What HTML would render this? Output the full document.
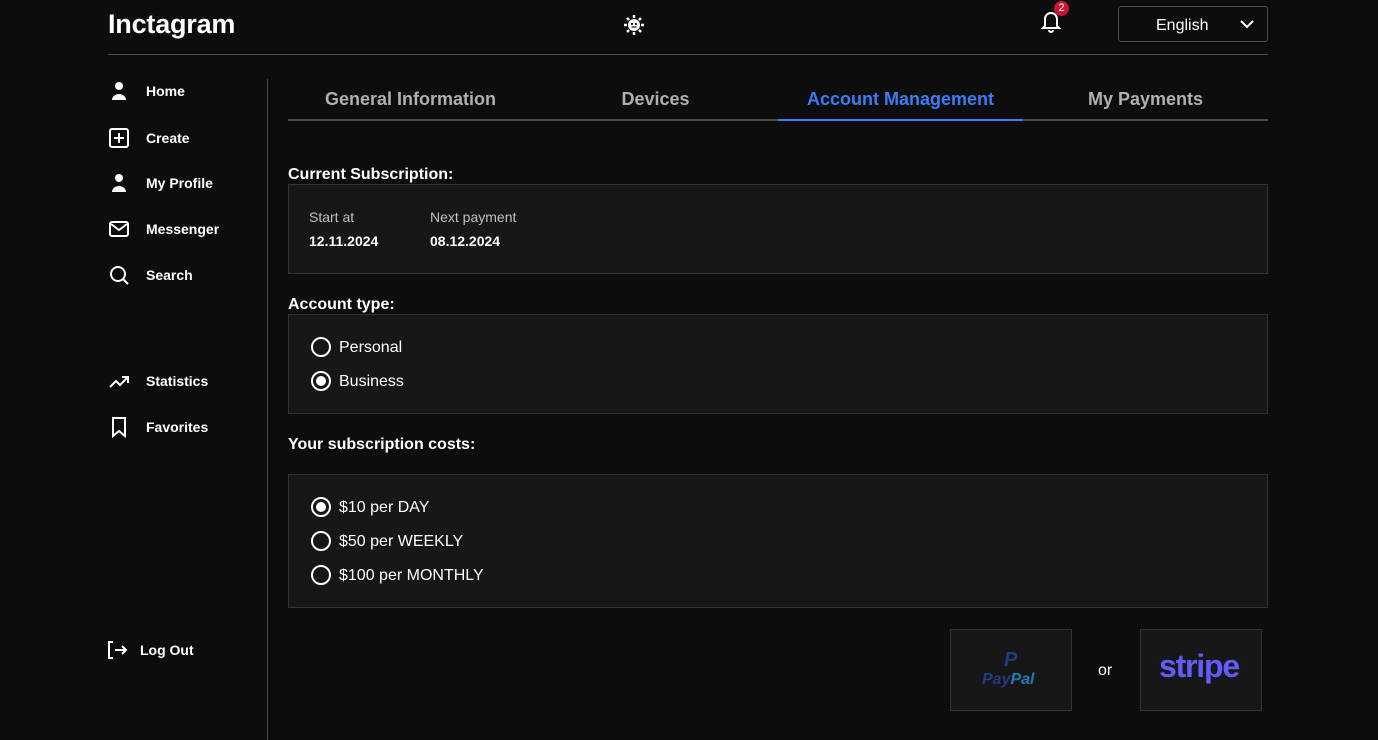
<!DOCTYPE html>
<html><head><style>
*{margin:0;padding:0;box-sizing:border-box}
body{width:1378px;height:740px;background:#0d0d0d;color:#fff;font-family:"Liberation Sans",Arial,sans-serif;position:relative;overflow:hidden}
.abs{position:absolute}
.logo{left:108px;top:9px;font-size:27px;font-weight:bold;letter-spacing:-0.2px}
.hline{left:108px;top:54px;width:1160px;height:1px;background:#4c4c4c}
.vline{left:267px;top:79px;width:1px;height:661px;background:#4c4c4c}
.nav{left:108px;font-size:14px;font-weight:bold;display:flex;align-items:center}
.nav svg{width:22px;height:22px;margin-right:16px}
.tab{top:89px;font-size:18px;font-weight:bold;color:#b0b0b0;text-align:center;width:245px}
.box{left:288px;width:980px;background:#171717;border:1px solid #333}
.h{left:288px;font-size:16px;font-weight:bold}
.radio{display:flex;align-items:center;font-size:16px;position:absolute;left:311px}
.radio i{width:20px;height:20px;border:2px solid #fff;border-radius:50%;margin-right:8px;display:flex;align-items:center;justify-content:center}
.radio span{position:relative;top:1px}
.radio i.on::after{content:"";width:10px;height:10px;background:#fff;border-radius:50%}
</style></head><body>
<div class="abs logo">Inctagram</div>
<svg class="abs" style="left:623px;top:14px" width="22" height="22" viewBox="0 0 22 22" fill="#fff"><circle cx="11" cy="11" r="6"/><g stroke="#fff" stroke-width="2.4"><path d="M11 1v3M11 18v3M1 11h3M18 11h3M4 4l2 2M16 16l2 2M4 18l2-2M16 6l2-2"/></g><circle cx="9" cy="10" r="1.1" fill="#0d0d0d"/><circle cx="13" cy="10" r="1.1" fill="#0d0d0d"/><path d="M8.5 13h5" stroke="#0d0d0d" stroke-width="1.2"/></svg>
<svg class="abs" style="left:1040px;top:9px" width="22" height="24" viewBox="0 0 22 24" fill="none" stroke="#fff" stroke-width="2"><path d="M5 17V10a6 6 0 0 1 12 0v7l2 2H3z"/><path d="M9 21a2 2 0 0 0 4 0"/></svg>
<div class="abs" style="left:1054px;top:1px;width:15px;height:15px;border-radius:50%;background:#cc1439;font-size:11px;text-align:center;line-height:15px">2</div>
<div class="abs" style="left:1118px;top:6px;width:150px;height:36px;border:1px solid #4c4c4c;border-radius:3px;font-size:16px;line-height:38px;padding-left:37px">English</div>
<svg class="abs" style="left:1238px;top:17px" width="18" height="14" viewBox="0 0 18 14" fill="none" stroke="#fff" stroke-width="2"><path d="M3 4l6 6 6-6"/></svg>
<div class="abs hline"></div>
<div class="abs vline"></div>

<div class="abs nav" style="top:80px"><svg viewBox="0 0 22 22" fill="#fff"><circle cx="11" cy="6" r="4"/><path d="M4 20a7 6 0 0 1 14 0z"/></svg>Home</div>
<div class="abs nav" style="top:127px"><svg viewBox="0 0 22 22" fill="none" stroke="#fff" stroke-width="2"><rect x="2" y="2" width="18" height="18" rx="2"/><path d="M11 6v10M6 11h10"/></svg>Create</div>
<div class="abs nav" style="top:172px"><svg viewBox="0 0 22 22" fill="#fff"><circle cx="11" cy="6" r="4"/><path d="M4 20a7 6 0 0 1 14 0z"/></svg>My Profile</div>
<div class="abs nav" style="top:218px"><svg viewBox="0 0 22 22" fill="none" stroke="#fff" stroke-width="2"><rect x="2" y="4" width="18" height="14" rx="2"/><path d="M3 6l8 6 8-6"/></svg>Messenger</div>
<div class="abs nav" style="top:264px"><svg viewBox="0 0 22 22" fill="none" stroke="#fff" stroke-width="2"><circle cx="10" cy="10" r="7"/><path d="M15 15l5 5"/></svg>Search</div>
<div class="abs nav" style="top:370px"><svg viewBox="0 0 22 22" fill="none" stroke="#fff" stroke-width="2"><path d="M2 17l6-6 4 4 8-8M14 7h6v6"/></svg>Statistics</div>
<div class="abs nav" style="top:416px"><svg viewBox="0 0 22 22" fill="none" stroke="#fff" stroke-width="2"><path d="M5 2h12v18l-6-5-6 5z"/></svg>Favorites</div>
<div class="abs nav" style="top:639px;left:106px"><svg viewBox="0 0 22 22" fill="none" stroke="#fff" stroke-width="2" style="margin-right:12px"><path d="M7 3H3v16h4M9 11h11M16 7l4 4-4 4"/></svg>Log Out</div>

<div class="abs tab" style="left:288px">General Information</div>
<div class="abs tab" style="left:533px">Devices</div>
<div class="abs tab" style="left:778px;color:#397df6">Account Management</div>
<div class="abs tab" style="left:1023px">My Payments</div>
<div class="abs" style="left:288px;top:119px;width:980px;height:2px;background:#4c4c4c"></div>
<div class="abs" style="left:778px;top:119px;width:245px;height:2px;background:#397df6"></div>

<div class="abs h" style="top:166px">Current Subscription:</div>
<div class="abs box" style="top:184px;height:90px"></div>
<div class="abs" style="left:309px;top:209px;font-size:14px;color:#c0c0c0">Start at</div>
<div class="abs" style="left:309px;top:233px;font-size:14px;font-weight:bold">12.11.2024</div>
<div class="abs" style="left:430px;top:209px;font-size:14px;color:#c0c0c0">Next payment</div>
<div class="abs" style="left:430px;top:233px;font-size:14px;font-weight:bold">08.12.2024</div>

<div class="abs h" style="top:296px">Account type:</div>
<div class="abs box" style="top:314px;height:100px"></div>
<div class="radio" style="top:337px"><i></i><span>Personal</span></div>
<div class="radio" style="top:371px"><i class="on"></i><span>Business</span></div>

<div class="abs h" style="top:436px">Your subscription costs:</div>
<div class="abs box" style="top:474px;height:134px"></div>
<div class="radio" style="top:497px"><i class="on"></i><span>$10 per DAY</span></div>
<div class="radio" style="top:531px"><i></i><span>$50 per WEEKLY</span></div>
<div class="radio" style="top:565px"><i></i><span>$100 per MONTHLY</span></div>

<div class="abs" style="left:950px;top:629px;width:122px;height:82px;background:#171717;border:1px solid #333"></div>
<div class="abs" style="left:1004px;top:650px;font-style:italic;font-weight:bold;color:#253b80;font-size:20px;line-height:20px">P</div>
<div class="abs" style="left:982px;top:671px;font-size:16px;font-style:italic;font-weight:bold"><span style="color:#253b80">Pay</span><span style="color:#1a7fb8">Pal</span></div>
<div class="abs" style="left:1098px;top:662px;font-size:16px">or</div>
<div class="abs" style="left:1140px;top:629px;width:122px;height:82px;background:#171717;border:1px solid #333"></div>
<div class="abs" style="left:1159px;top:648px;font-size:32px;font-weight:bold;color:#635bff;letter-spacing:-1.2px">stripe</div>
</body></html>
